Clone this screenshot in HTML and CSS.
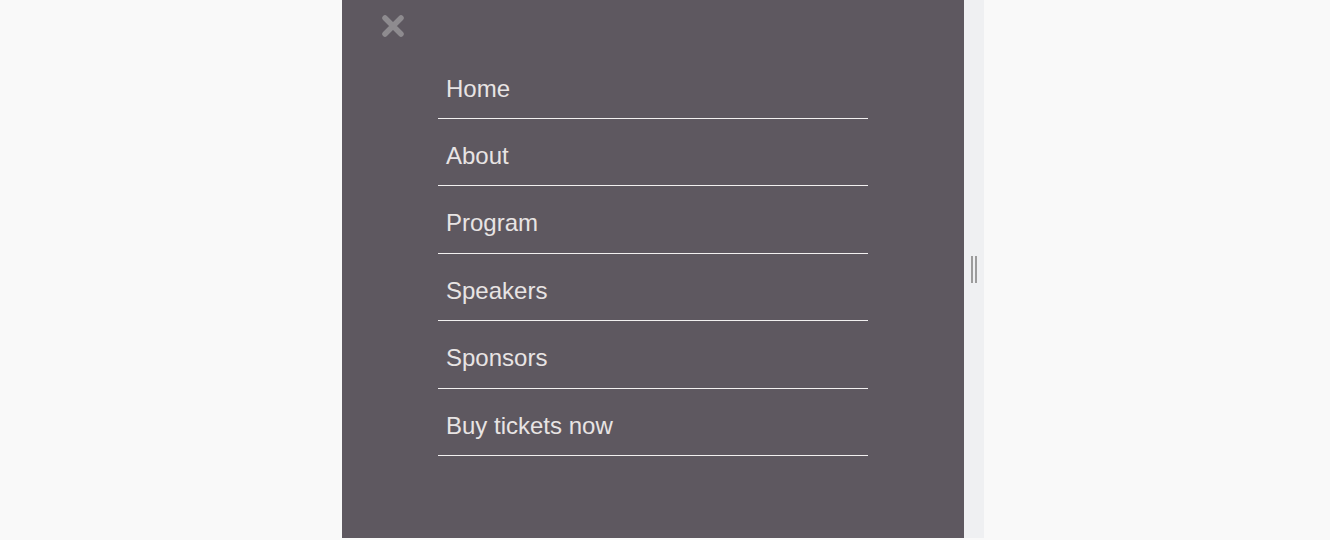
FILE: index.html
```html
<!DOCTYPE html>
<html lang="en">
<head>
<meta charset="utf-8">
<title>Menu</title>
<link rel="stylesheet" href="styles.css">
</head>
<body>
<div class="page">
  <div class="panel">
    <button class="close" aria-label="Close">
      <svg width="24" height="24" viewBox="0 0 24 24"><path d="M4 4 L20 20 M20 4 L4 20" stroke="#8e8b8f" stroke-width="5.5" stroke-linecap="round" fill="none"/></svg>
    </button>
    <ul class="menu">
      <li class="item">Home</li>
      <li class="item">About</li>
      <li class="item">Program</li>
      <li class="item">Speakers</li>
      <li class="item">Sponsors</li>
      <li class="item">Buy tickets now</li>
    </ul>
  </div>
  <div class="strip"><div class="handle"></div></div>
</div>
</body>
</html>
```

FILE: styles.css
```css
html, body {
  margin: 0;
  padding: 0;
  background: #f9f9f9;
  font-family: "Liberation Sans", Arial, sans-serif;
}
.page {
  display: flex;
  padding-left: 342px;
  height: 538px;
}
.panel {
  width: 622px;
  height: 538px;
  background: #5e5860;
  display: flex;
  flex-direction: column;
}
.close {
  margin: 14px 0 0 39px;
  width: 24px;
  height: 24px;
  padding: 0;
  border: 0;
  background: none;
  display: flex;
}
.menu {
  list-style: none;
  margin: 13.6px 0 0 96px;
  padding: 0;
  width: 430px;
}
.item {
  font-size: 24px;
  line-height: 28px;
  color: #e8e4e4;
  padding: 23px 8px 15.4px;
  border-bottom: 1px solid #f2f0f0;
}
.strip {
  width: 20px;
  height: 538px;
  background: #eff0f2;
  display: flex;
  align-items: center;
  justify-content: center;
}
.handle {
  width: 2px;
  height: 27px;
  border-left: 2px solid #9c9c9c;
  border-right: 2px solid #9c9c9c;
}
```
